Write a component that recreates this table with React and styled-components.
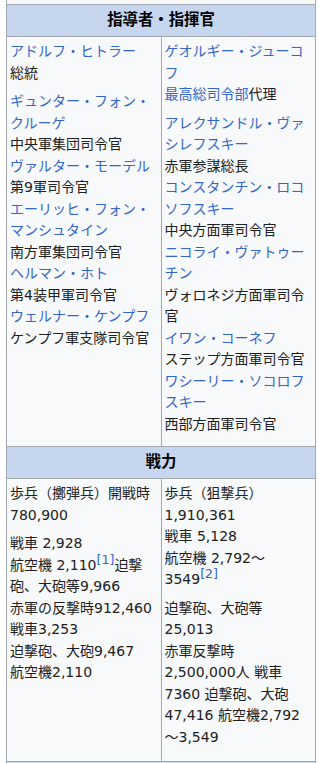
import styled, { createGlobalStyle } from "styled-components";

const GlobalStyle = createGlobalStyle`
  html, body {
    margin: 0;
    padding: 0;
    background: #fff;
  }
  body {
    font-family: "DejaVu Sans", "Noto Sans CJK JP", sans-serif;
    color: #202122;
  }
`;

const Infobox = styled.table`
  margin-left: 6px;
  width: 310px;
  border-collapse: collapse;
  table-layout: fixed;
  background: #f8f9fa;
  font-size: 14px;
  line-height: 21.5px;
`;

const Cell = styled.td`
  border: 1px solid #a2a9b1;
  padding: 4px 3px ${(p) => p.$padBottom || 4}px;
  vertical-align: top;
`;

// leftover bottom of the section above
const Tail = styled.td`
  border: 1px solid #a2a9b1;
  border-top: none;
  height: 4px;
  padding: 0;
`;

const Head = styled.th`
  border: 1px solid #a2a9b1;
  background: #c5d6ee;
  padding: 3px;
  font-size: 15.4px;
  line-height: 25px;
  font-weight: bold;
  text-align: center;
  color: #000;
`;

const Para = styled.p`
  margin: 0 0 7px;
`;

const Link = styled.a`
  color: #3366cc;
  text-decoration: none;
`;

// reference marks sit above the text without growing the line
const Ref = styled.sup`
  font-size: 12.6px;
  line-height: 0;
  vertical-align: super;
  color: #3366cc;
`;

export default function App() {
  return (
    <div lang="ja">
      <GlobalStyle />
      <Infobox>
        <colgroup>
          <col style={{ width: "50%" }} />
          <col style={{ width: "50%" }} />
        </colgroup>
        <tbody>
          <tr>
            <Tail colSpan={2} />
          </tr>
          <tr>
            <Head colSpan={2}>指導者・指揮官</Head>
          </tr>
          <tr>
            <Cell>
              <Para>
                <Link href="#">アドルフ・ヒトラー</Link>
                <br />
                総統
              </Para>
              <Para>
                <Link href="#">ギュンター・フォン・クルーゲ</Link>
                <br />
                中央軍集団司令官
                <br />
                <Link href="#">ヴァルター・モーデル</Link>
                <br />
                第9軍司令官
                <br />
                <Link href="#">エーリッヒ・フォン・マンシュタイン</Link>
                <br />
                南方軍集団司令官
                <br />
                <Link href="#">ヘルマン・ホト</Link>
                <br />
                第4装甲軍司令官
                <br />
                <Link href="#">ウェルナー・ケンプフ</Link>
                <br />
                ケンプフ軍支隊司令官
              </Para>
            </Cell>
            <Cell>
              <Para>
                <Link href="#">ゲオルギー・ジューコフ</Link>
                <br />
                <Link href="#">最高総司令部</Link>代理
              </Para>
              <Para>
                <Link href="#">アレクサンドル・ヴァシレフスキー</Link>
                <br />
                赤軍参謀総長
                <br />
                <Link href="#">コンスタンチン・ロコソフスキー</Link>
                <br />
                中央方面軍司令官
                <br />
                <Link href="#">ニコライ・ヴァトゥーチン</Link>
                <br />
                ヴォロネジ方面軍司令官
                <br />
                <Link href="#">イワン・コーネフ</Link>
                <br />
                ステップ方面軍司令官
                <br />
                <Link href="#">ワシーリー・ソコロフスキー</Link>
                <br />
                西部方面軍司令官
              </Para>
            </Cell>
          </tr>
          <tr>
            <Head colSpan={2}>戦力</Head>
          </tr>
          <tr>
            <Cell $padBottom={6}>
              <Para>
                歩兵（擲弾兵）開戦時
                <br />
                780,900
              </Para>
              <Para>
                戦車 2,928
                <br />
                航空機 2,110<Ref>[1]</Ref>迫撃砲、大砲等9,966
                <br />
                赤軍の反撃時912,460
                <br />
                戦車3,253
                <br />
                迫撃砲、大砲9,467
                <br />
                航空機2,110
              </Para>
            </Cell>
            <Cell $padBottom={6}>
              <Para>
                歩兵（狙撃兵）
                <br />
                1,910,361
                <br />
                戦車 5,128
                <br />
                航空機 2,792〜3549<Ref>[2]</Ref>
              </Para>
              <Para>
                迫撃砲、大砲等
                <br />
                25,013
                <br />
                赤軍反撃時
                <br />
                2,500,000人 戦車 7360 迫撃砲、大砲 47,416 航空機2,792
                <wbr />
                〜3,549
              </Para>
            </Cell>
          </tr>
          <tr>
            <Head colSpan={2}>損害</Head>
          </tr>
        </tbody>
      </Infobox>
    </div>
  );
}
